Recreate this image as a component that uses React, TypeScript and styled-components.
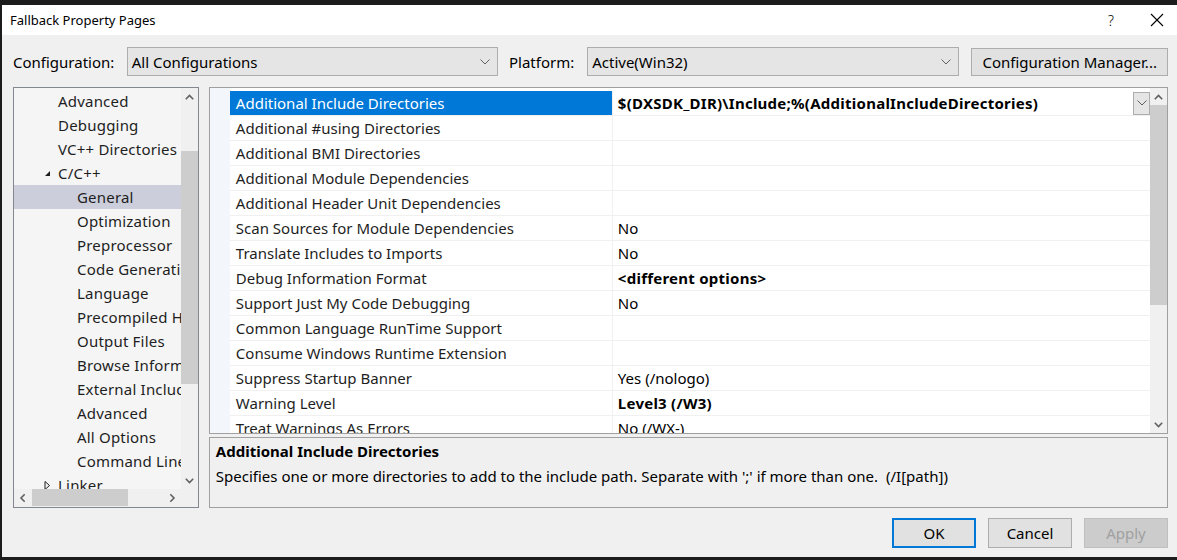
import styled, { createGlobalStyle } from "styled-components";

const GlobalStyle = createGlobalStyle`
  html, body {
    margin: 0;
    padding: 0;
    background: #1c1c1c;
  }
  body {
    font-family: "Noto Sans", "Liberation Sans", sans-serif;
    font-size: 14px;
    color: #000;
  }
`;

type Prop = { name: string; value?: string; bold?: boolean };

const treeItems: { label: string; level: number; expander?: "open" | "closed"; selected?: boolean }[] = [
  { label: "Advanced", level: 1 },
  { label: "Debugging", level: 1 },
  { label: "VC++ Directories", level: 1 },
  { label: "C/C++", level: 1, expander: "open" },
  { label: "General", level: 2, selected: true },
  { label: "Optimization", level: 2 },
  { label: "Preprocessor", level: 2 },
  { label: "Code Generation", level: 2 },
  { label: "Language", level: 2 },
  { label: "Precompiled Headers", level: 2 },
  { label: "Output Files", level: 2 },
  { label: "Browse Information", level: 2 },
  { label: "External Includes", level: 2 },
  { label: "Advanced", level: 2 },
  { label: "All Options", level: 2 },
  { label: "Command Line", level: 2 },
  { label: "Linker", level: 1, expander: "closed" },
];

const props: Prop[] = [
  { name: "Additional Include Directories", value: "$(DXSDK_DIR)\\Include;%(AdditionalIncludeDirectories)", bold: true },
  { name: "Additional #using Directories" },
  { name: "Additional BMI Directories" },
  { name: "Additional Module Dependencies" },
  { name: "Additional Header Unit Dependencies" },
  { name: "Scan Sources for Module Dependencies", value: "No" },
  { name: "Translate Includes to Imports", value: "No" },
  { name: "Debug Information Format", value: "<different options>", bold: true },
  { name: "Support Just My Code Debugging", value: "No" },
  { name: "Common Language RunTime Support" },
  { name: "Consume Windows Runtime Extension" },
  { name: "Suppress Startup Banner", value: "Yes (/nologo)" },
  { name: "Warning Level", value: "Level3 (/W3)", bold: true },
  { name: "Treat Warnings As Errors", value: "No (/WX-)" },
];

function Chevron({ dir, color = "#606060" }: { dir: "up" | "down" | "left" | "right"; color?: string }) {
  const rot = { up: 0, right: 90, down: 180, left: 270 }[dir];
  return (
    <svg width="9" height="6" viewBox="0 0 9 6" style={{ transform: `rotate(${rot}deg)` }}>
      <path d="M0.8 5.2 L4.5 1.5 L8.2 5.2" fill="none" stroke={color} strokeWidth="1.6" />
    </svg>
  );
}

function ComboArrow() {
  return (
    <svg width="10" height="6" viewBox="0 0 10 6">
      <path d="M0.5 0.5 L5 5 L9.5 0.5" fill="none" stroke="#606060" strokeWidth="1" />
    </svg>
  );
}

export default function App() {
  return (
    <>
      <GlobalStyle />
      <Frame>
        <Window>
          <TitleBar>
            <Title>Fallback Property Pages</Title>
            <TitleButtons>
              <TitleGlyph>?</TitleGlyph>
              <TitleGlyph>
                <svg width="14" height="14" viewBox="0 0 14 14">
                  <path d="M1 1 L13 13 M13 1 L1 13" stroke="#000" strokeWidth="1.1" />
                </svg>
              </TitleGlyph>
            </TitleButtons>
          </TitleBar>

          <Body>
            <ConfigRow>
              <Label>Configuration:</Label>
              <Combo $width={372}>
                <span>All Configurations</span>
                <ComboArrow />
              </Combo>
              <Label $ml={11}>Platform:</Label>
              <Combo $width={373} $ml={13}>
                <span>Active(Win32)</span>
                <ComboArrow />
              </Combo>
              <Button $width={197} $ml={12} $h={28}>Configuration Manager...</Button>
            </ConfigRow>

            <Main>
              <Tree>
                <TreeContent>
                  {treeItems.map((t, i) => (
                    <TreeRow key={i} $level={t.level} $selected={t.selected}>
                      <Expander>
                        {t.expander === "open" && (
                          <svg width="7" height="7" viewBox="0 0 7 7">
                            <path d="M6 1 L6 6 L1 6 Z" fill="#1e1e1e" />
                          </svg>
                        )}
                        {t.expander === "closed" && (
                          <svg width="7" height="9" viewBox="0 0 7 9">
                            <path d="M1 0.5 L5.5 4.5 L1 8.5 Z" fill="none" stroke="#1e1e1e" strokeWidth="1" />
                          </svg>
                        )}
                      </Expander>
                      <TreeLabel>{t.label}</TreeLabel>
                    </TreeRow>
                  ))}
                </TreeContent>
                <VScroll>
                  <ScrollArrow><Chevron dir="up" /></ScrollArrow>
                  <ScrollTrack>
                    <Thumb $top={46} $size={233} />
                  </ScrollTrack>
                  <ScrollArrow><Chevron dir="down" /></ScrollArrow>
                </VScroll>
                <HScroll>
                  <ScrollArrow><Chevron dir="left" /></ScrollArrow>
                  <HTrack>
                    <HThumb $left={1} $size={96} />
                  </HTrack>
                  <ScrollArrow><Chevron dir="right" /></ScrollArrow>
                </HScroll>
                <Corner />
              </Tree>

              <RightColumn>
                <Grid>
                  <Gutter />
                  <Rows>
                    {props.map((p, i) => (
                      <PropRow key={i}>
                        <NameCell $selected={i === 0}>{p.name}</NameCell>
                        <ValueCell $bold={p.bold}>
                          <span>{p.value}</span>
                          {i === 0 && (
                            <DropButton>
                              <ComboArrow />
                            </DropButton>
                          )}
                        </ValueCell>
                      </PropRow>
                    ))}
                  </Rows>
                  <VScroll $grid>
                    <ScrollArrow><Chevron dir="up" /></ScrollArrow>
                    <ScrollTrack>
                      <Thumb $top={0} $size={200} />
                    </ScrollTrack>
                    <ScrollArrow><Chevron dir="down" /></ScrollArrow>
                  </VScroll>
                </Grid>

                <Description>
                  <DescTitle>Additional Include Directories</DescTitle>
                  <DescText>
                    Specifies one or more directories to add to the include path. Separate with ';' if more than one.
                    <Switch>(/I[path])</Switch>
                  </DescText>
                </Description>
              </RightColumn>
            </Main>

            <Footer>
              <Button $width={84} $default>OK</Button>
              <Button $width={84}>Cancel</Button>
              <Button $width={84} $disabled>Apply</Button>
            </Footer>
          </Body>
        </Window>
      </Frame>
    </>
  );
}

const Frame = styled.div`
  width: 1177px;
  height: 560px;
  padding: 5px 0 3px 2px;
  box-sizing: border-box;
  background: #1c1c1c;
  overflow: hidden;
`;

const Window = styled.div`
  height: 100%;
  display: flex;
  flex-direction: column;
  background: #f0f0f0;
`;

const TitleBar = styled.div`
  height: 30px;
  flex: none;
  background: #fff;
  display: flex;
  align-items: center;
  justify-content: space-between;
  padding-left: 8px;
`;

const Title = styled.div`
  font-size: 13px;
  color: #000;
`;

const TitleButtons = styled.div`
  display: flex;
  align-items: center;
  gap: 30px;
  padding-right: 12px;
`;

const TitleGlyph = styled.div`
  width: 16px;
  display: flex;
  justify-content: center;
  align-items: center;
  font-size: 14px;
  font-weight: 300;
`;

const Body = styled.div`
  flex: 1;
  display: flex;
  flex-direction: column;
  padding: 12px 9px 9px 11px;
`;

const ConfigRow = styled.div`
  display: flex;
  align-items: center;
  height: 29px;
`;

const Label = styled.div<{ $ml?: number }>`
  margin-left: ${(p) => p.$ml ?? 0}px;
  width: ${(p) => (p.$ml ? "auto" : "114px")};
  font-size: 15px;
  white-space: nowrap;
`;

const Combo = styled.div<{ $width: number; $ml?: number }>`
  width: ${(p) => p.$width}px;
  margin-left: ${(p) => p.$ml ?? 0}px;
  height: 29px;
  box-sizing: border-box;
  border: 1px solid #adadad;
  background: #e5e5e5;
  display: flex;
  align-items: center;
  justify-content: space-between;
  padding: 0 7px 0 4px;
  font-size: 15px;
`;

const Button = styled.div<{ $width: number; $ml?: number; $h?: number; $default?: boolean; $disabled?: boolean }>`
  width: ${(p) => p.$width}px;
  height: ${(p) => p.$h ?? 30}px;
  margin-left: ${(p) => p.$ml ?? 0}px;
  box-sizing: border-box;
  display: flex;
  align-items: center;
  justify-content: center;
  font-size: 15px;
  background: ${(p) => (p.$disabled ? "#cccccc" : "#e1e1e1")};
  color: ${(p) => (p.$disabled ? "#a0a0a0" : "#000")};
  border: ${(p) => (p.$default ? "2px solid #0078d7" : p.$disabled ? "1px solid #bfbfbf" : "1px solid #adadad")};
`;

const Main = styled.div`
  display: flex;
  gap: 10px;
  margin-top: 11px;
  height: 421px;
`;

const Tree = styled.div`
  width: 186px;
  box-sizing: border-box;
  border: 1px solid #828790;
  background: #f5f5f5;
  display: grid;
  grid-template-columns: 1fr 17px;
  grid-template-rows: 1fr 18px;
  overflow: hidden;
`;

const TreeContent = styled.div`
  overflow: hidden;
  padding-top: 1px;
`;

const TreeRow = styled.div<{ $level: number; $selected?: boolean }>`
  height: 24px;
  display: flex;
  align-items: center;
  white-space: nowrap;
  overflow: hidden;
  padding-left: ${(p) => (p.$level === 1 ? 30 : 49)}px;
  color: #1e1e1e;
  background: ${(p) => (p.$selected ? "#cccedb" : "transparent")};
`;

const Expander = styled.span`
  width: 14px;
  flex: none;
  display: inline-flex;
  align-items: center;
  justify-content: flex-start;
`;

const TreeLabel = styled.span`
  flex: none;
  font-size: 15px;
  letter-spacing: 0.2px;
`;

const VScroll = styled.div<{ $grid?: boolean }>`
  width: 17px;
  flex: none;
  background: #f0f0f0;
  display: flex;
  flex-direction: column;
  ${(p) => p.$grid && "height: 100%;"}
`;

const ScrollArrow = styled.div`
  width: 17px;
  height: 17px;
  flex: none;
  display: flex;
  align-items: center;
  justify-content: center;
`;

const ScrollTrack = styled.div`
  flex: 1;
  position: relative;
`;

const Thumb = styled.div<{ $top: number; $size: number }>`
  position: absolute;
  left: 0;
  right: 0;
  top: ${(p) => p.$top}px;
  height: ${(p) => p.$size}px;
  background: #cdcdcd;
`;

const HScroll = styled.div`
  display: flex;
  background: #f0f0f0;
`;

const HTrack = styled.div`
  flex: 1;
  position: relative;
`;

const HThumb = styled.div<{ $left: number; $size: number }>`
  position: absolute;
  top: 0;
  bottom: 1px;
  left: ${(p) => p.$left}px;
  width: ${(p) => p.$size}px;
  background: #cdcdcd;
`;

const Corner = styled.div`
  background: #f0f0f0;
`;

const RightColumn = styled.div`
  width: 960px;
  display: flex;
  flex-direction: column;
  gap: 3px;
`;

const Grid = styled.div`
  height: 347px;
  box-sizing: border-box;
  border: 1px solid #a0a0a0;
  background: #fff;
  display: flex;
  overflow: hidden;
`;

const Gutter = styled.div`
  width: 20px;
  flex: none;
  background: #f3f6fb;
`;

const Rows = styled.div`
  flex: 1;
  padding-top: 3px;
  overflow: hidden;
`;

const PropRow = styled.div`
  display: flex;
  height: 25px;
  border-bottom: 1px solid #f0f0f0;
  box-sizing: border-box;
`;

const NameCell = styled.div<{ $selected?: boolean }>`
  width: 383px;
  flex: none;
  box-sizing: border-box;
  padding-left: 6px;
  display: flex;
  align-items: center;
  white-space: nowrap;
  font-size: 15px;
  border-right: 1px solid #f0f0f0;
  background: ${(p) => (p.$selected ? "#0078d7" : "#fff")};
  color: ${(p) => (p.$selected ? "#fff" : "#1e1e1e")};
`;

const ValueCell = styled.div<{ $bold?: boolean }>`
  flex: 1;
  display: flex;
  align-items: center;
  justify-content: space-between;
  padding-left: 5px;
  white-space: nowrap;
  font-size: 15px;
  font-weight: ${(p) => (p.$bold ? 700 : 400)};
  letter-spacing: ${(p) => (p.$bold ? "0.25px" : "0")};
  color: #000;
`;

const DropButton = styled.div`
  width: 17px;
  height: 23px;
  box-sizing: border-box;
  border: 1px solid #adadad;
  background: #e5e5e5;
  display: flex;
  align-items: center;
  justify-content: center;
`;

const Description = styled.div`
  flex: 1;
  box-sizing: border-box;
  border: 1px solid #a0a0a0;
  background: #f0f0f0;
  padding: 2px 6px;
`;

const DescTitle = styled.div`
  font-weight: 700;
  font-size: 15px;
  height: 22px;
  line-height: 22px;
`;

const DescText = styled.div`
  font-size: 15px;
  height: 28px;
  line-height: 28px;
  white-space: nowrap;
`;

const Switch = styled.span`
  margin-left: 8px;
`;

const Footer = styled.div`
  display: flex;
  justify-content: flex-end;
  gap: 12px;
  margin-top: 10px;
`;
